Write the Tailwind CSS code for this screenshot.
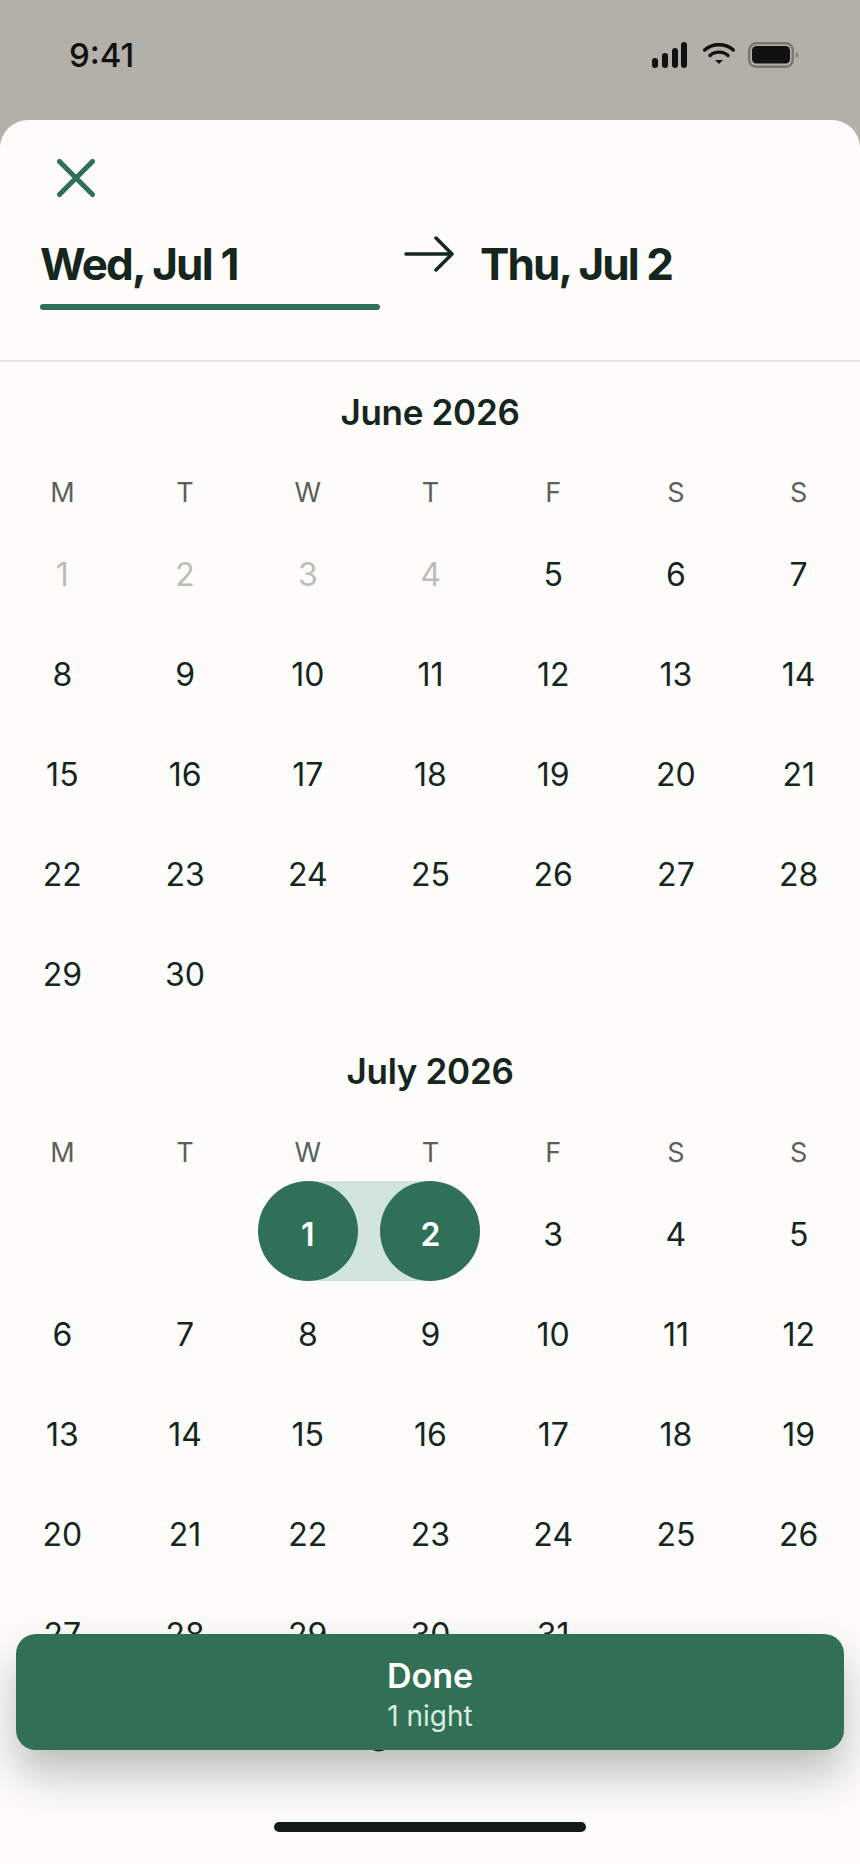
<!DOCTYPE html>
<html>
<head>
<meta charset="utf-8">
<script src="https://cdn.jsdelivr.net/npm/@tailwindcss/browser@4"></script>
</head>
<body class="m-0">
<div class="relative w-[860px] h-[1864px] overflow-hidden bg-[#b3b0a9] font-['Inter',sans-serif] text-[#15261f]">
  <div class="flex h-[120px] items-start justify-between pl-[69px] pr-[61px] pt-[36px]">
    <span class="text-[33px] font-medium leading-[38px] text-[#111]">9:41</span>
    <div class="flex items-start pt-[6px]">
      <svg width="35" height="26" viewBox="0 0 35 26"><g fill="#111"><rect x="0" y="16" width="6" height="10" rx="3"/><rect x="10" y="11" width="6" height="15" rx="3"/><rect x="20" y="6" width="6" height="20" rx="3"/><rect x="29" y="0" width="6" height="26" rx="3"/></g></svg>
      <svg class="ml-[16px]" width="32" height="23" viewBox="0 0 32 23" fill="none" stroke="#111" stroke-width="3.400" stroke-linecap="round"><path d="M1.700 8C9 1 23 1 30.300 8"/><path d="M7 13.500C11.500 9 20.500 9 25 13.500"/><path d="M12 18H20L16 22Z" fill="#111" stroke="none"/></svg>
      <svg class="ml-[13px]" width="51" height="26" viewBox="0 0 51 26" fill="none"><rect x="1.200" y="1.200" width="43.600" height="23.600" rx="7" stroke="#77756f" stroke-width="2.400"/><rect x="4" y="4" width="38" height="17.500" rx="4.500" fill="#111"/><path d="M48 10C50.500 11 50.500 15 48 16Z" fill="#77756f"/></svg>
    </div>
  </div>
  <div class="relative h-[1744px] rounded-t-[28px] bg-[#fdfcfa] overflow-hidden">
    <header class="h-[242px] border-b-2 border-[#e4e3e0]">
      <div class="pl-[56px] pt-[38px] h-[80px]">
        <svg width="40" height="40" viewBox="0 0 40 40" fill="none" stroke="#2f6f55" stroke-width="5" stroke-linecap="round"><path d="M3.500 3.500L36.500 36.500M36.500 3.500L3.500 36.500"/></svg>
      </div>
      <div class="flex items-start mt-[42px] pl-[40px]">
        <div class="w-[340px]">
          <div class="text-[44px] font-bold leading-[44px] tracking-[-1.800px]">Wed, Jul 1</div>
          <div class="mt-[18px] h-[6px] rounded-full bg-[#2f7056]"></div>
        </div>
        <svg class="ml-[24px] mt-[-6px]" width="50" height="36" viewBox="0 0 50 36" fill="none" stroke="#15261f" stroke-width="3.500" stroke-linecap="round" stroke-linejoin="round"><path d="M2 18H48M32 2L48 18L32 34"/></svg>
        <span class="ml-[26px] text-[44px] font-bold leading-[44px] tracking-[-1.900px]">Thu, Jul 2</span>
      </div>
    </header>
    <main class="text-center">
      <section>
        <h2 class="mt-[22px] h-[56px] text-[35px] font-semibold leading-[56px] tracking-[-0.300px]">June 2026</h2>
        <div class="grid grid-cols-7 h-[85px] items-center pl-px pt-[22px] text-[27px] text-[#5a615d]"><span>M</span><span>T</span><span>W</span><span>T</span><span>F</span><span>S</span><span>S</span></div>
        <div class="grid grid-cols-7 auto-rows-[100px] items-center pl-px text-[32px]">
          <span class="text-[#bcbdb9]">1</span><span class="text-[#bcbdb9]">2</span><span class="text-[#bcbdb9]">3</span><span class="text-[#bcbdb9]">4</span><span>5</span><span>6</span><span>7</span>
          <span>8</span><span>9</span><span>10</span><span>11</span><span>12</span><span>13</span><span>14</span>
          <span>15</span><span>16</span><span>17</span><span>18</span><span>19</span><span>20</span><span>21</span>
          <span>22</span><span>23</span><span>24</span><span>25</span><span>26</span><span>27</span><span>28</span>
          <span>29</span><span>30</span>
        </div>
      </section>
      <section>
        <h2 class="mt-[18px] h-[56px] text-[35px] font-semibold leading-[56px] tracking-[-0.300px]">July 2026</h2>
        <div class="grid grid-cols-7 h-[86px] items-center pl-px pt-[22px] text-[27px] text-[#5a615d]"><span>M</span><span>T</span><span>W</span><span>T</span><span>F</span><span>S</span><span>S</span></div>
        <div class="grid grid-cols-7 auto-rows-[100px] items-center pl-px text-[32px]">
          <span></span><span></span>
          <div class="relative h-[100px] -translate-y-[4px]"><div class="absolute inset-y-0 left-1/2 right-0 bg-[#d2e5da]"></div><div class="relative mx-auto flex size-[100px] items-center justify-center rounded-full bg-[#2f7056] pt-[7px] font-semibold text-white">1</div></div>
          <div class="relative h-[100px] -translate-y-[4px]"><div class="absolute inset-y-0 left-0 right-1/2 bg-[#d2e5da]"></div><div class="relative mx-auto flex size-[100px] items-center justify-center rounded-full bg-[#2f7056] pt-[7px] font-semibold text-white">2</div></div>
          <span>3</span><span>4</span><span>5</span>
          <span>6</span><span>7</span><span>8</span><span>9</span><span>10</span><span>11</span><span>12</span>
          <span>13</span><span>14</span><span>15</span><span>16</span><span>17</span><span>18</span><span>19</span>
          <span>20</span><span>21</span><span>22</span><span>23</span><span>24</span><span>25</span><span>26</span>
          <span>27</span><span>28</span><span>29</span><span>30</span><span>31</span>
        </div>
      </section>
      <section>
        <h2 class="mt-[18px] h-[56px] text-[35px] font-semibold leading-[56px] tracking-[-0.300px]">August 2026</h2>
      </section>
    </main>
    <div class="absolute inset-x-0 bottom-0 h-[112px] bg-[#fdfcfa]"></div>
    <button class="absolute left-[16px] right-[16px] top-[1514px] flex h-[116px] flex-col items-center justify-center rounded-[20px] bg-[#317055] text-white shadow-[0_24px_44px_rgba(20,30,25,0.28)]">
      <span class="text-[34px] font-semibold leading-[47px]">Done</span>
      <span class="text-[28px] leading-[34px] text-[#d8ece0]">1 night</span>
    </button>
    <div class="absolute bottom-[32px] left-1/2 h-[10px] w-[312px] -translate-x-1/2 rounded-[5px] bg-[#121a15]"></div>
  </div>
</div>
</body>
</html>
